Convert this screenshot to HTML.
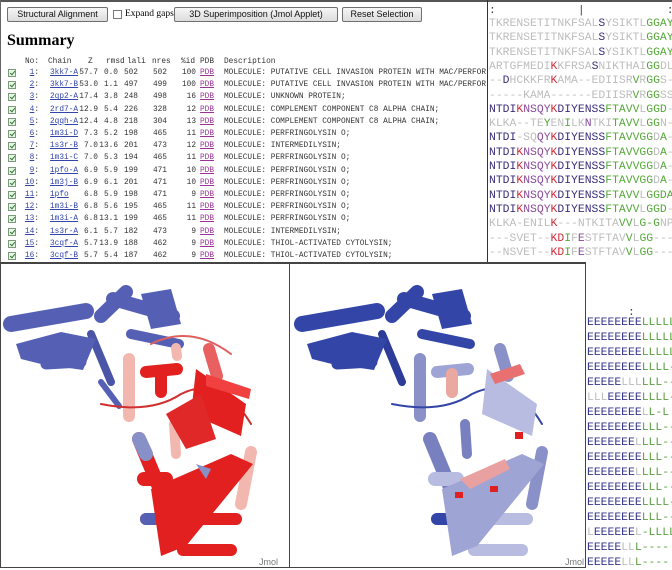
<!DOCTYPE html>
<html><head><meta charset="utf-8"><style>
*{margin:0;padding:0;box-sizing:border-box}
body{width:672px;height:568px;overflow:hidden;background:#fff;position:relative;font-family:"Liberation Sans",sans-serif}
.abs{position:absolute}
.btn{position:absolute;top:7px;height:15px;border:1px solid #707070;border-radius:2px;background:linear-gradient(#f6f6f6,#dcdcdc);font-size:9px;text-align:center;line-height:13px;color:#111}
.t{position:absolute;font-family:"Liberation Mono",monospace;font-size:7.8px;color:#333;white-space:pre;line-height:10px}
.cb{position:absolute;left:8px;width:8px;height:8px;border:1px solid #7a9a7a;background:#e8f4e8}
.cb:after{content:"";position:absolute;left:2px;top:0px;width:2px;height:4px;border:solid #2a7a2a;border-width:0 1px 1px 0;transform:rotate(40deg)}
.lk{color:#3344aa;text-decoration:underline}
.pdb{color:#993399;text-decoration:underline}
.al{position:absolute;left:489px;font-family:"Liberation Mono",monospace;font-size:11.4px;white-space:pre;line-height:14px;color:#bdbdbd}
.ss{position:absolute;left:587px;font-family:"Liberation Mono",monospace;font-size:11.4px;white-space:pre;line-height:14px;color:#bdbdbd}
.d{color:#3a2f7a}.r{color:#d02b3a}.g{color:#56a83a}.p{color:#8a4a9a}
.e{color:#35358a}.l{color:#5aa040}
</style></head><body>
<div class="abs" style="left:0;top:0;width:672px;height:2px;background:#555"></div>
<div class="abs" style="left:0;top:0;width:1px;height:262px;background:#666"></div>
<div class="btn" style="left:7px;width:101px">Structural Alignment</div>
<div class="abs" style="left:113px;top:10px;width:9px;height:9px;border:1px solid #777;background:#fff"></div>
<div class="abs" style="left:125px;top:9px;font-family:'Liberation Serif',serif;font-size:9.5px">Expand gaps</div>
<div class="btn" style="left:174px;width:164px">3D Superimposition (Jmol Applet)</div>
<div class="btn" style="left:342px;width:80px">Reset Selection</div>
<div class="abs" style="left:7px;top:32px;font-family:'Liberation Serif',serif;font-weight:bold;font-size:16px">Summary</div>
<div class="t" style="left:25px;top:57px">No:</div>
<div class="t" style="left:48px;top:57px">Chain</div>
<div class="t" style="left:88px;top:57px">Z</div>
<div class="t" style="left:106px;top:57px">rmsd</div>
<div class="t" style="left:127px;top:57px">lali</div>
<div class="t" style="left:152px;top:57px">nres</div>
<div class="t" style="left:181px;top:57px">%id</div>
<div class="t" style="left:200px;top:57px">PDB</div>
<div class="t" style="left:224px;top:57px">Description</div>
<div id="rows"></div>
<div class="abs" style="left:487px;top:0;width:1px;height:263px;background:#333"></div>
<div class="al" style="top:4px;color:#444">:            |            :</div>
<div class="al" style="top:17px">TKRENSETITNKFSAL<span class="d">S</span>YSIKTL<span class="g">GGAYG</span></div>
<div class="al" style="top:31px">TKRENSETITNKFSAL<span class="d">S</span>YSIKTL<span class="g">GGAYG</span></div>
<div class="al" style="top:46px">TKRENSETITNKFSAL<span class="d">S</span>YSIKTL<span class="g">GGAYG</span></div>
<div class="al" style="top:60px">ARTGFMEDI<span class="r">K</span>KFRSA<span class="d">S</span>NIKTHAI<span class="g">GG</span>DL-</div>
<div class="al" style="top:74px">--<span class="d">D</span>HCKKFR<span class="r">K</span>AMA--EDIISR<span class="g">V</span>R<span class="g">GG</span>S--</div>
<div class="al" style="top:89px">-----KAMA------EDIISR<span class="g">V</span>R<span class="g">GG</span>SS-</div>
<div class="al" style="top:103px"><span class="d">NTDI</span><span class="r">K</span><span class="p">NSQY</span><span class="r">K</span><span class="d">DIYENSS</span><span class="g">FTAVV</span>L<span class="g">GGD</span>-P</div>
<div class="al" style="top:117px">KLKA--TE<span class="g">Y</span>EN<span class="g">I</span>LK<span class="p">N</span>TKI<span class="g">TAVV</span>L<span class="g">GG</span>N--</div>
<div class="al" style="top:131px"><span class="d">NTDI</span>-SQ<span class="p">QY</span><span class="r">K</span><span class="d">DIYENSS</span><span class="g">FTAVVGG</span>D<span class="g">A</span>--</div>
<div class="al" style="top:146px"><span class="d">NTDI</span><span class="r">K</span><span class="p">NSQY</span><span class="r">K</span><span class="d">DIYENSS</span><span class="g">FTAVVGG</span>D<span class="g">A</span>--</div>
<div class="al" style="top:160px"><span class="d">NTDI</span><span class="r">K</span><span class="p">NSQY</span><span class="r">K</span><span class="d">DIYENSS</span><span class="g">FTAVVGG</span>D<span class="g">A</span>--</div>
<div class="al" style="top:174px"><span class="d">NTDI</span><span class="r">K</span><span class="p">NSQY</span><span class="r">K</span><span class="d">DIYENSS</span><span class="g">FTAVVGG</span>D<span class="g">A</span>--</div>
<div class="al" style="top:189px"><span class="d">NTDI</span><span class="r">K</span><span class="p">NSQY</span><span class="r">K</span><span class="d">DIYENSS</span><span class="g">FTAVV</span>L<span class="g">GGDA</span>-</div>
<div class="al" style="top:203px"><span class="d">NTDI</span><span class="r">K</span><span class="p">NSQY</span><span class="r">K</span><span class="d">DIYENSS</span><span class="g">FTAVV</span>L<span class="g">GGD</span>--</div>
<div class="al" style="top:217px">KLKA-ENIL<span class="r">K</span>---NTKITA<span class="g">VV</span>L<span class="g">G-G</span>NPG</div>
<div class="al" style="top:232px">---SVET--<span class="r">KD</span><span class="g">I</span>F<span class="p">E</span>STFTAV<span class="g">V</span>L<span class="g">GG</span>---</div>
<div class="al" style="top:246px">--NSVET--<span class="r">KD</span><span class="g">I</span>F<span class="p">E</span>STFTAV<span class="g">V</span>L<span class="g">GG</span>---</div>

<div class="abs" style="left:0;top:262px;width:290px;height:306px;border:1px solid #444;border-top:2px solid #444;background:#fff;overflow:hidden">
<svg width="290" height="306" viewBox="0 0 290 306">
<g stroke-linecap="round" fill="none">
<path d="M10 60 L85 47" stroke="#5560b4" stroke-width="16"/>
<path d="M100 52 L125 28" stroke="#5560b4" stroke-width="14"/>
<path d="M112 35 L172 52" stroke="#5560b4" stroke-width="14"/>
<path d="M130 70 L178 80" stroke="#5560b4" stroke-width="10"/>
<path d="M45 100 L80 98" stroke="#5560b4" stroke-width="11"/>
<path d="M90 70 L110 118" stroke="#4a55a8" stroke-width="8"/>
<path d="M100 118 L118 142" stroke="#5560b4" stroke-width="6"/>
<path d="M128 95 L128 152" stroke="#f2b8b0" stroke-width="12"/>
<path d="M145 108 L176 105" stroke="#e22020" stroke-width="12"/>
<path d="M160 112 L160 128" stroke="#e22020" stroke-width="12"/>
<path d="M175 84 L176 92" stroke="#f2b8b0" stroke-width="10"/>
<path d="M208 85 L216 112" stroke="#e86060" stroke-width="12"/>
<path d="M138 175 L160 228" stroke="#e22020" stroke-width="14"/>
<path d="M138 175 L145 190" stroke="#8890c8" stroke-width="14"/>
<path d="M143 215 L165 215" stroke="#e22020" stroke-width="14"/>
<path d="M145 255 L235 255" stroke="#e22020" stroke-width="12"/>
<path d="M145 255 L175 255" stroke="#5560b4" stroke-width="12"/>
<path d="M182 286 L230 286" stroke="#e22020" stroke-width="12"/>
<path d="M250 188 L240 240" stroke="#f2b8b0" stroke-width="12"/>
<path d="M173 160 L175 190" stroke="#f2b8b0" stroke-width="10"/>
<path d="M100 140 Q150 150 180 130 Q220 110 250 160" stroke="#d03030" stroke-width="2"/>
<path d="M150 80 Q190 60 230 90" stroke="#e06060" stroke-width="2"/>
</g>
<polygon points="15,80 60,68 95,75 82,106 40,100 20,95" fill="#5560b4"/>
<polygon points="140,30 170,25 180,60 150,65" fill="#5560b4"/>
<polygon points="195,105 245,140 240,172 190,150" fill="#e22020"/>
<polygon points="205,110 250,125 248,135 205,122" fill="#f04040"/>
<polygon points="150,225 230,190 252,200 185,282 160,292" fill="#e22020"/>
<polygon points="165,150 200,130 215,175 185,185" fill="#e02828"/>
<polygon points="195,200 210,205 205,215" fill="#8890c8"/>
<text x="258" y="301" font-family="Liberation Sans" font-size="9" fill="#777">Jmol</text>
</svg></div>

<div class="abs" style="left:289px;top:262px;width:297px;height:306px;border:1px solid #444;border-top:2px solid #444;background:#fff;overflow:hidden">
<svg width="297" height="306" viewBox="0 0 297 306">
<g stroke-linecap="round" fill="none">
<path d="M12 60 L87 47" stroke="#3346a8" stroke-width="16"/>
<path d="M102 52 L127 28" stroke="#3346a8" stroke-width="14"/>
<path d="M114 35 L174 52" stroke="#3346a8" stroke-width="14"/>
<path d="M132 70 L180 80" stroke="#3346a8" stroke-width="10"/>
<path d="M47 100 L82 98" stroke="#3346a8" stroke-width="11"/>
<path d="M92 70 L112 118" stroke="#2d3c98" stroke-width="8"/>
<path d="M130 95 L130 152" stroke="#8a90c8" stroke-width="12"/>
<path d="M147 108 L178 105" stroke="#9ea4d4" stroke-width="12"/>
<path d="M162 110 L162 128" stroke="#eaa8a0" stroke-width="12"/>
<path d="M210 85 L218 112" stroke="#8a90c8" stroke-width="12"/>
<path d="M140 175 L162 228" stroke="#7880c0" stroke-width="14"/>
<path d="M145 215 L167 215" stroke="#b8bce0" stroke-width="14"/>
<path d="M147 255 L237 255" stroke="#b8bce0" stroke-width="12"/>
<path d="M147 255 L180 255" stroke="#3346a8" stroke-width="12"/>
<path d="M184 286 L232 286" stroke="#b8bce0" stroke-width="12"/>
<path d="M252 188 L242 240" stroke="#8a90c8" stroke-width="12"/>
<path d="M175 160 L177 190" stroke="#7880c0" stroke-width="10"/>
<path d="M102 140 Q152 150 182 130 Q222 110 252 160" stroke="#3346a8" stroke-width="2"/>
</g>
<polygon points="17,80 62,68 97,75 84,106 42,100 22,95" fill="#3346a8"/>
<polygon points="142,30 172,25 182,60 152,65" fill="#3346a8"/>
<polygon points="197,105 247,140 242,172 192,150" fill="#b8bce0"/>
<polygon points="200,110 230,100 235,110 205,120" fill="#e87070"/>
<polygon points="152,225 232,190 254,200 187,282 162,292" fill="#9ea4d4"/>
<polygon points="170,215 215,195 220,205 180,225" fill="#e8a0a0"/>
<rect x="200" y="222" width="8" height="6" fill="#e02020"/>
<rect x="165" y="228" width="8" height="6" fill="#e02020"/>
<rect x="225" y="168" width="8" height="7" fill="#e02020"/>
<text x="275" y="301" font-family="Liberation Sans" font-size="9" fill="#777">Jmol</text>
</svg></div>

<div class="ss" style="top:306px;color:#444">      :</div>
<div class="ss" style="top:316px"><span class="e">EEEEEEEE</span><span class="l">LLLLL</span></div>
<div class="ss" style="top:331px"><span class="e">EEEEEEEE</span><span class="l">LLLLL</span></div>
<div class="ss" style="top:346px"><span class="e">EEEEEEEE</span><span class="l">LLLLL</span></div>
<div class="ss" style="top:361px"><span class="e">EEEEEEEE</span><span class="l">LLLL-</span></div>
<div class="ss" style="top:376px"><span class="e">EEEEE</span>LLL<span class="l">LLL--</span></div>
<div class="ss" style="top:391px">LLL<span class="e">EEEEE</span><span class="l">LLLL-</span></div>
<div class="ss" style="top:406px"><span class="e">EEEEEEEE</span>L<span class="l">L-L</span></div>
<div class="ss" style="top:421px"><span class="e">EEEEEEEE</span><span class="l">LLL--</span></div>
<div class="ss" style="top:436px"><span class="e">EEEEEEE</span>L<span class="l">LLL--</span></div>
<div class="ss" style="top:451px"><span class="e">EEEEEEEE</span><span class="l">LLL--</span></div>
<div class="ss" style="top:466px"><span class="e">EEEEEEE</span>L<span class="l">LLL--</span></div>
<div class="ss" style="top:481px"><span class="e">EEEEEEEE</span><span class="l">LLL--</span></div>
<div class="ss" style="top:496px"><span class="e">EEEEEEEE</span><span class="l">LLLL-</span></div>
<div class="ss" style="top:511px"><span class="e">EEEEEEEE</span><span class="l">LLL--</span></div>
<div class="ss" style="top:526px">L<span class="e">EEEEEE</span>L<span class="l">-LLLL</span></div>
<div class="ss" style="top:541px"><span class="e">EEEEE</span>LL<span class="l">L----</span></div>
<div class="ss" style="top:556px"><span class="e">EEEEE</span>LL<span class="l">L----</span></div>

<script>
var d=[["1","3kk7-A","57.7","0.0","502","502","100","PUTATIVE CELL INVASION PROTEIN WITH MAC/PERFOR"],
["2","3kk7-B","53.0","1.1","497","499","100","PUTATIVE CELL INVASION PROTEIN WITH MAC/PERFOR"],
["3","2qp2-A","17.4","3.8","248","498","16","UNKNOWN PROTEIN;"],
["4","2rd7-A","12.9","5.4","226","328","12","COMPLEMENT COMPONENT C8 ALPHA CHAIN;"],
["5","2qqh-A","12.4","4.8","218","304","13","COMPLEMENT COMPONENT C8 ALPHA CHAIN;"],
["6","1m3i-D","7.3","5.2","198","465","11","PERFRINGOLYSIN O;"],
["7","1s3r-B","7.0","13.6","201","473","12","INTERMEDILYSIN;"],
["8","1m3i-C","7.0","5.3","194","465","11","PERFRINGOLYSIN O;"],
["9","1pfo-A","6.9","5.9","199","471","10","PERFRINGOLYSIN O;"],
["10","1m3j-B","6.9","6.1","201","471","10","PERFRINGOLYSIN O;"],
["11","1pfo","6.8","5.9","198","471","9","PERFRINGOLYSIN O;"],
["12","1m3i-B","6.8","5.6","195","465","11","PERFRINGOLYSIN O;"],
["13","1m3i-A","6.8","13.1","199","465","11","PERFRINGOLYSIN O;"],
["14","1s3r-A","6.1","5.7","182","473","9","INTERMEDILYSIN;"],
["15","3cqf-A","5.7","13.9","188","462","9","THIOL-ACTIVATED CYTOLYSIN;"],
["16","3cqf-B","5.7","5.4","187","462","9","THIOL-ACTIVATED CYTOLYSIN;"]];
var h="";
function R(x,txt,y,cls){return '<div class="t" style="top:'+y+'px;left:'+(x-60)+'px;width:60px;text-align:right">'+(cls?'<span class="'+cls+'">'+txt+'</span>':txt)+'</div>';}
function L(x,txt,y,cls){return '<div class="t" style="top:'+y+'px;left:'+x+'px">'+(cls?'<span class="'+cls+'">'+txt+'</span>':txt)+'</div>';}
for(var i=0;i<d.length;i++){var y=68+i*12.2,r=d[i];
h+='<div class="cb" style="top:'+(y+1)+'px"></div>';
h+=R(39,'<span class="lk">'+r[0]+'</span>:',y);
h+=L(50,r[1],y,"lk");h+=R(98,r[2],y);h+=R(118,r[3],y);h+=R(138,r[4],y);h+=R(167,r[5],y);h+=R(196,r[6],y);
h+=L(200,"PDB",y,"pdb");h+=L(224,"MOLECULE: "+r[7],y);}
document.getElementById("rows").innerHTML=h;
</script>
</body></html>
